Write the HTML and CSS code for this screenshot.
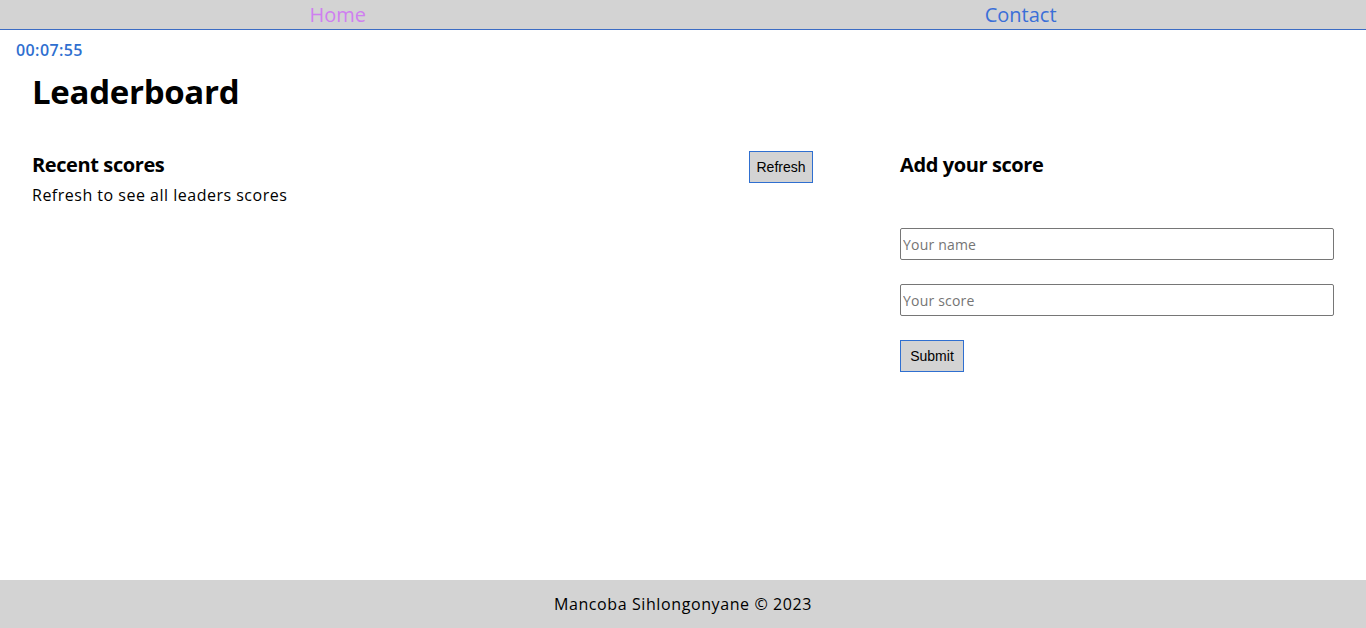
FILE: index.html
```html
<!DOCTYPE html>
<html lang="en">
<head>
<meta charset="utf-8">
<title>Leaderboard</title>
<link rel="stylesheet" href="styles.css">
</head>
<body>
<header class="nav">
  <a class="nav-link visited" href="#">Home</a>
  <a class="nav-link" href="#">Contact</a>
</header>
<div class="timer">00:07:55</div>
<main class="main">
  <h1 class="title">Leaderboard</h1>
  <div class="columns">
    <section class="recent">
      <div class="recent-head">
        <h2 class="subtitle">Recent scores</h2>
        <button class="btn" type="button">Refresh</button>
      </div>
      <p class="hint">Refresh to see all leaders scores</p>
    </section>
    <section class="add">
      <h2 class="subtitle">Add your score</h2>
      <form class="form">
        <input class="field" type="text" placeholder="Your name">
        <input class="field" type="text" placeholder="Your score">
        <button class="btn" type="button">Submit</button>
      </form>
    </section>
  </div>
</main>
<footer class="footer">Mancoba Sihlongonyane © 2023</footer>
</body>
</html>
```
FILE: styles.css
```css
* { box-sizing: border-box; }
html, body { height: 100%; }
body {
  margin: 0;
  font-family: "Open Sans", "Noto Sans", sans-serif;
  color: #000;
  display: flex;
  flex-direction: column;
  min-height: 628px;
}
.nav {
  height: 30px;
  background: #d3d3d3;
  border-bottom: 1px solid #3c6cc4;
  display: flex;
  justify-content: space-around;
  align-items: center;
}
.nav-link {
  font-size: 20px;
  text-decoration: none;
  color: #3a6fd8;
  line-height: 26px;
}
.nav-link.visited { color: #cf7ff0; }
.timer {
  margin: 10px 0 0 16px;
  font-family: "Open Sans", sans-serif;
  font-weight: 600;
  font-size: 16px;
  letter-spacing: 0.4px;
  color: #2f6fd0;
  line-height: 20px;
}
.main {
  flex: 1;
  padding: 0 32px;
}
.title {
  margin: 10px 0 0;
  font-size: 33px;
  font-weight: 700;
  line-height: 44px;
  letter-spacing: -0.3px;
}
.columns {
  display: grid;
  grid-template-columns: 781px 1fr;
  column-gap: 87px;
  margin-top: 37px;
}
.recent-head {
  display: flex;
  justify-content: space-between;
  align-items: flex-start;
}
.subtitle {
  margin: 0;
  font-size: 20px;
  font-weight: 700;
  line-height: 28px;
  letter-spacing: -0.4px;
}
.hint {
  margin: 0;
  font-size: 16px;
  line-height: 24px;
  letter-spacing: 0.5px;
}
.btn {
  width: 64px;
  height: 32px;
  padding: 0;
  background: #d3d3d3;
  border: 1px solid #2f6fd0;
  font-family: "Liberation Sans", Arial, sans-serif;
  font-size: 14px;
  color: #000;
}
.form {
  display: flex;
  flex-direction: column;
  align-items: flex-start;
  gap: 24px;
  margin-top: 49px;
}
.field {
  width: 434px;
  height: 32px;
  border: 1px solid #767676;
  border-radius: 2px;
  padding: 0 2px;
  font-family: "Open Sans", sans-serif;
  font-size: 14px;
  letter-spacing: 0.2px;
}
.field::placeholder { color: #757575; }
.footer {
  height: 48px;
  background: #d3d3d3;
  display: flex;
  align-items: center;
  justify-content: center;
  font-size: 16px;
  letter-spacing: 0.6px;
}
```
